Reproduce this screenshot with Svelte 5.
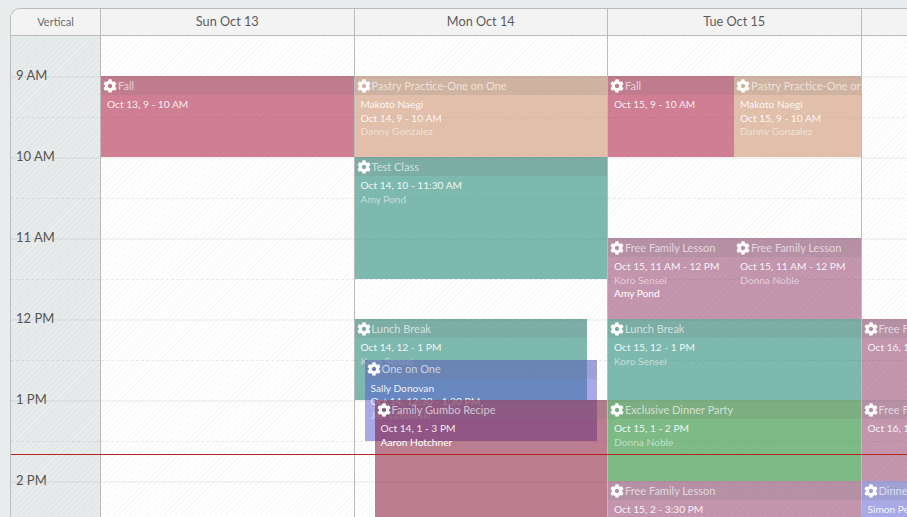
<script>
  const HOUR = 81;
  const FIRST = 40;

  const hours = ['9 AM', '10 AM', '11 AM', '12 PM', '1 PM', '2 PM'];

  // lines: [text, level] where level is how bright the text sits on the event
  const days = [
    {
      label: 'Sun Oct 13',
      events: [
        { title: 'Fall', kind: 'rose', start: 9, len: 1, lines: [['Oct 13, 9 - 10 AM', 'mid']] }
      ]
    },
    {
      label: 'Mon Oct 14',
      events: [
        { title: 'Pastry Practice-One on One', kind: 'peach', start: 9, len: 1, lines: [['Makoto Naegi', 'mid'], ['Oct 14, 9 - 10 AM', 'mid'], ['Danny Gonzalez', 'dim']] },
        { title: 'Test Class', kind: 'teal', start: 10, len: 1.5, lines: [['Oct 14, 10 - 11:30 AM', 'mid'], ['Amy Pond', 'dim']] },
        { title: 'Lunch Break', kind: 'teal', start: 12, len: 1, left: 0, width: 232, lines: [['Oct 14, 12 - 1 PM', 'mid'], ['Koro Sensei', 'dim']] },
        { title: 'One on One', kind: 'blue', start: 12.5, len: 1, left: 10, width: 232, lines: [['Sally Donovan', 'mid'], ['Oct 14, 12:30 - 1:30 PM', 'mid'], ['Jeff Lebowski', 'dim']] },
        { title: 'Family Gumbo Recipe', kind: 'wine', start: 13, len: 2, left: 20, width: 232, lines: [['Oct 14, 1 - 3 PM', 'mid'], ['Aaron Hotchner', 'bright']] }
      ]
    },
    {
      label: 'Tue Oct 15',
      events: [
        { title: 'Fall', kind: 'rose', start: 9, len: 1, left: 0, width: 126, lines: [['Oct 15, 9 - 10 AM', 'mid']] },
        { title: 'Pastry Practice-One on One', kind: 'peach', start: 9, len: 1, left: 126, width: 127, lines: [['Makoto Naegi', 'mid'], ['Oct 15, 9 - 10 AM', 'mid'], ['Danny Gonzalez', 'dim']] },
        { title: 'Free Family Lesson', kind: 'mauve', start: 11, len: 1, left: 0, width: 126, lines: [['Oct 15, 11 AM - 12 PM', 'mid'], ['Koro Sensei', 'dim'], ['Amy Pond', 'bright']] },
        { title: 'Free Family Lesson', kind: 'mauve', start: 11, len: 1, left: 126, width: 127, lines: [['Oct 15, 11 AM - 12 PM', 'mid'], ['Donna Noble', 'dim']] },
        { title: 'Lunch Break', kind: 'teal', start: 12, len: 1, lines: [['Oct 15, 12 - 1 PM', 'mid'], ['Koro Sensei', 'dim']] },
        { title: 'Exclusive Dinner Party', kind: 'green', start: 13, len: 1, lines: [['Oct 15, 1 - 2 PM', 'mid'], ['Donna Noble', 'dim']] },
        { title: 'Free Family Lesson', kind: 'mauve', start: 14, len: 1.5, lines: [['Oct 15, 2 - 3:30 PM', 'mid']] }
      ]
    },
    {
      label: 'Wed Oct 16',
      events: [
        { title: 'Free Family Lesson', kind: 'mauve', start: 12, len: 1, lines: [['Oct 16, 12 - 1 PM', 'mid']] },
        { title: 'Free Family Lesson', kind: 'mauve', start: 13, len: 1, lines: [['Oct 16, 1 - 2 PM', 'mid']] },
        { title: 'Dinner Party', kind: 'blue', start: 14, len: 1, lines: [['Simon Pegg', 'mid']] }
      ]
    }
  ];

  function place(ev) {
    const top = FIRST + (ev.start - 9) * HOUR;
    const h = ev.len * HOUR;
    const horiz = ev.width ? `left:${ev.left}px;width:${ev.width}px` : 'left:0;right:0';
    return `top:${top}px;height:${h}px;${horiz}`;
  }

  const cog = 'M487.4 315.7l-42.6-24.6c4.3-23.2 4.3-47 0-70.2l42.6-24.6c4.9-2.8 7.1-8.6 5.5-14-11.1-35.6-30-67.8-54.7-94.6-3.8-4.1-10-5.1-14.8-2.3L380.8 110c-17.9-15.4-38.5-27.3-60.8-35.1V25.8c0-5.6-3.9-10.5-9.4-11.7-36.7-8.2-74.3-7.8-109.2 0-5.5 1.2-9.4 6.1-9.4 11.7V75c-22.2 7.9-42.8 19.8-60.8 35.1L88.7 85.5c-4.9-2.8-11-1.9-14.8 2.3-24.7 26.7-43.6 58.9-54.7 94.6-1.7 5.4.6 11.2 5.5 14L67.3 221c-4.3 23.2-4.3 47 0 70.2l-42.6 24.6c-4.9 2.8-7.1 8.6-5.5 14 11.1 35.6 30 67.8 54.7 94.6 3.8 4.1 10 5.1 14.8 2.3l42.6-24.6c17.9 15.4 38.5 27.3 60.8 35.1v49.2c0 5.6 3.9 10.5 9.4 11.7 36.7 8.2 74.3 7.8 109.2 0 5.5-1.2 9.4-6.1 9.4-11.7v-49.2c22.2-7.9 42.8-19.8 60.8-35.1l42.6 24.6c4.9 2.8 11 1.9 14.8-2.3 24.7-26.7 43.6-58.9 54.7-94.6 1.5-5.5-.7-11.3-5.6-14.1zM256 336c-44.1 0-80-35.9-80-80s35.9-80 80-80 80 35.9 80 80-35.9 80-80 80z';
</script>

<div class="page">
  <div class="calendar">
    <div class="head">
      <div class="corner">Vertical</div>
      {#each days as day}
        <div class="day-label">{day.label}</div>
      {/each}
    </div>

    <div class="body">
      <div class="times">
        <div class="slot first"></div>
        {#each hours as hour}
          <div class="slot">
            <div class="half"></div>
            <span class="hour">{hour}</span>
          </div>
        {/each}
      </div>

      {#each days as day}
        <div class="day">
          <div class="slot first"></div>
          {#each hours as hour}
            <div class="slot"><div class="half"></div></div>
          {/each}

          {#each day.events as ev}
            <div class="event {ev.kind}" style={place(ev)}>
              <div class="title">
                <svg viewBox="0 0 512 512" width="14" height="14"><path fill="#fff" d={cog} /></svg>
                <span>{ev.title}</span>
              </div>
              <div class="details">
                {#each ev.lines as [text, level]}
                  <div class={level}>{text}</div>
                {/each}
              </div>
            </div>
          {/each}
        </div>
      {/each}

      <div class="now"></div>
    </div>
  </div>
</div>

<style>
  :global(body) {
    margin: 0;
    background: #e9eded;
  }

  .page {
    width: 907px;
    height: 517px;
    box-sizing: border-box;
    padding: 8px 0 0 10px;
    overflow: hidden;
    font-family: "Lato", "Open Sans", sans-serif;
    color: #555;
  }

  .calendar {
    width: 1200px;
    height: 509px;
    overflow: hidden;
    box-sizing: border-box;
    border-top: 1px solid #bbb;
    border-left: 1px solid #bbb;
    border-top-left-radius: 10px;
  }

  .head {
    display: grid;
    grid-template-columns: 90px repeat(4, 253.5px);
    height: 27px;
    box-sizing: border-box;
    background: #f3f3f3;
    border-bottom: 1px solid #bbb;
  }

  .corner,
  .day-label {
    display: flex;
    align-items: center;
    justify-content: center;
    box-sizing: border-box;
    padding-bottom: 2px;
    border-right: 1px solid #bbb;
  }

  .corner {
    font-size: 11px;
    color: #6a6a6a;
  }

  .day-label {
    font-size: 12.7px;
    color: #5c5c5c;
  }

  .body {
    position: relative;
    display: grid;
    grid-template-columns: 90px repeat(4, 253.5px);
  }

  .times,
  .day {
    position: relative;
    box-sizing: border-box;
    border-right: 1px solid #bbb;
    height: 520px;
  }

  .times {
    background: repeating-linear-gradient(135deg, #e8ecec 0 2px, #e3e7e7 2px 4px);
  }

  .day {
    background: repeating-linear-gradient(135deg, #fff 0 2px, #fafafa 2px 4px);
  }

  .slot {
    height: 81px;
    box-sizing: border-box;
    border-top: 2px solid rgba(0, 0, 0, 0.04);
  }

  .slot.first {
    height: 40px;
    border-top: 0;
  }

  .half {
    height: 39px;
    border-bottom: 1px dashed rgba(0, 0, 0, 0.07);
  }

  .hour {
    display: block;
    margin-top: -52px;
    padding-left: 5px;
    line-height: 18px;
    font-size: 13px;
    color: #555;
  }

  .event {
    position: absolute;
    box-sizing: border-box;
    overflow: hidden;
    color: #fff;
    font-size: 10.2px;
    font-weight: 400;
    line-height: 13.5px;
  }

  .rose { background: rgba(162, 0, 42, 0.5); }
  .wine { background: rgba(125, 10, 45, 0.52); }
  .peach { background: rgba(198, 130, 88, 0.5); }
  .teal { background: rgba(0, 118, 98, 0.5); }
  .mauve { background: rgba(132, 35, 85, 0.47); }
  .green { background: rgba(0, 120, 14, 0.5); }
  .blue { background: rgba(84, 86, 210, 0.5); }

  .title {
    display: flex;
    align-items: center;
    gap: 1px;
    height: 19px;
    padding-left: 2px;
    background: rgba(120, 120, 120, 0.17);
    font-size: 11px;
    white-space: nowrap;
    color: rgba(255, 255, 255, 0.65);
  }

  .title svg {
    flex: none;
  }

  .details {
    padding: 3px 6px;
    white-space: nowrap;
  }

  .mid { color: rgba(255, 255, 255, 0.9); }
  .dim { color: rgba(255, 255, 255, 0.55); }
  .bright { color: #fff; }

  .now {
    position: absolute;
    left: 0;
    right: 0;
    top: 418px;
    height: 1px;
    background: #b3261e;
  }
</style>
